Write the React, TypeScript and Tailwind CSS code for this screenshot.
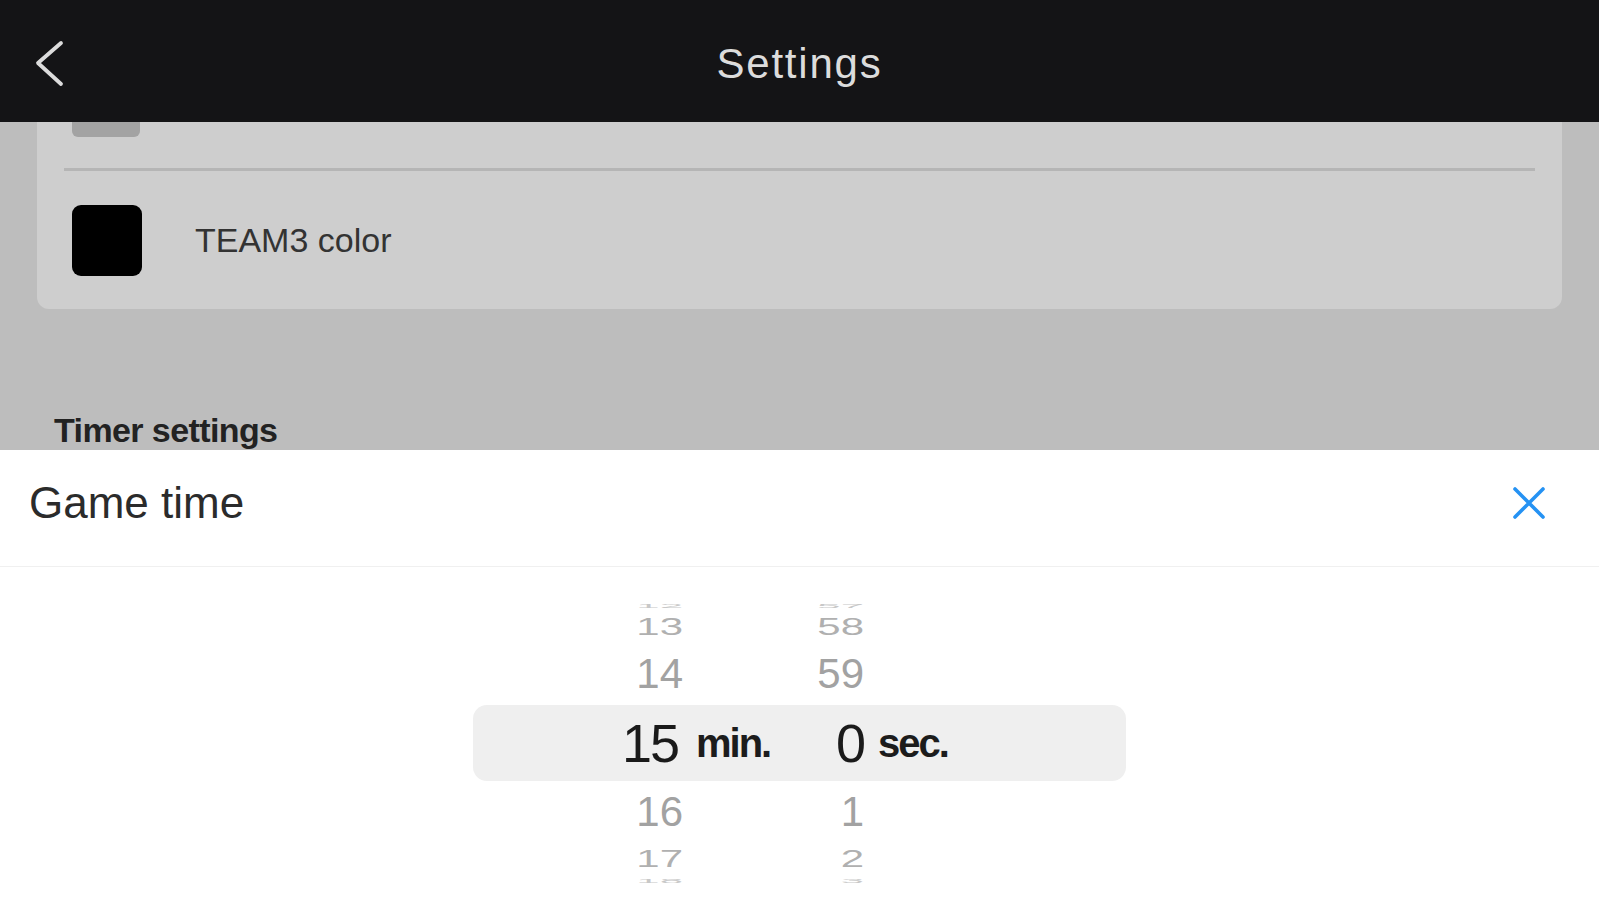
import React from "react";

const FONT = { fontFamily: '"Liberation Sans", Arial, sans-serif' };

type RowProps = {
  min: string;
  sec: string;
  h: string;
  textCls: string;
  selected?: boolean;
};

function PickerRow({ min, sec, h, textCls, selected }: RowProps) {
  return (
    <div className={`flex items-center ${h} w-[653px] ${selected ? "bg-[#efefef] rounded-[14px]" : ""}`}>
      <div className={`w-[210px] text-right leading-none ${selected ? "pr-[5px]" : ""} ${textCls}`}>{min}</div>
      <div className="w-[100px] pl-[13px] leading-none">
        {selected ? <span className="text-[40px] font-bold tracking-[-2px] text-[#1c1c1c]">min.</span> : null}
      </div>
      <div className={`w-[81px] text-right leading-none ${textCls}`}>{sec}</div>
      <div className="w-[262px] pl-[14px] leading-none">
        {selected ? <span className="text-[40px] font-bold tracking-[-2px] text-[#1c1c1c]">sec.</span> : null}
      </div>
    </div>
  );
}

export default function App() {
  return (
    <div className="w-[1599px] h-[900px] overflow-hidden flex flex-col bg-white" style={FONT}>
      {/* Top bar */}
      <div className="h-[122px] shrink-0 bg-[#141416] flex items-center relative">
        <div className="absolute left-[30px] top-[38px]">
          <svg width="40" height="50" viewBox="0 0 40 50" fill="none">
            <path d="M31 5 L8 25 L31 46" stroke="#dcdcdc" strokeWidth="3.8" strokeLinecap="round" strokeLinejoin="round" />
          </svg>
        </div>
        <div className="flex-1 text-center pt-[4px] text-[42px] tracking-[1.8px] text-[#dcdcdc]">Settings</div>
      </div>

      {/* Dimmed page */}
      <div className="h-[328px] shrink-0 bg-[#bdbdbd] overflow-hidden">
        <div className="mx-[37px] bg-[#cecece] rounded-b-[12px] flex flex-col">
          <div className="flex items-start h-[46px] px-[35px]">
            <div className="w-[68px] h-[15px] bg-[#a3a3a3] rounded-b-[6px]" />
          </div>
          <div className="mx-[27px] h-[3px] bg-[#b5b5b5]" />
          <div className="h-[138px] flex items-center px-[35px]">
            <div className="w-[70px] h-[71px] bg-black rounded-[9px]" />
            <div className="ml-[53px] text-[34px] text-[#333]">TEAM3 color</div>
          </div>
        </div>
        <div className="pl-[54px] pt-[104px] text-[34px] font-bold tracking-[-0.6px] text-[#222] leading-none">
          Timer settings
        </div>
      </div>

      {/* Bottom sheet */}
      <div className="flex-1 bg-white flex flex-col">
        <div className="h-[117px] shrink-0 flex items-center justify-between pl-[29px] pr-[53px] pb-[10px] border-b border-[#f0f0f0]">
          <div className="text-[44px] text-[#2b2b2b]">Game time</div>
          <svg width="34" height="34" viewBox="0 0 34 34" fill="none">
            <path d="M3 3 L31 31 M31 3 L3 31" stroke="#2592f3" strokeWidth="3.6" strokeLinecap="round" />
          </svg>
        </div>
        <div className="flex flex-col items-center pt-[33px]">
          <PickerRow min="12" sec="57" h="h-[11px]" textCls="text-[42px] text-[#c8c8c8] scale-y-[0.12]" />
          <PickerRow min="13" sec="58" h="h-[32px]" textCls="text-[42px] text-[#b0b0b0] scale-y-[0.58]" />
          <PickerRow min="14" sec="59" h="h-[62px]" textCls="text-[42px] text-[#a2a2a2]" />
          <PickerRow min="15" sec="0" h="h-[76px]" textCls="text-[54px] tracking-[-2px] text-[#1a1a1a]" selected />
          <PickerRow min="16" sec="1" h="h-[62px]" textCls="text-[42px] text-[#a2a2a2]" />
          <PickerRow min="17" sec="2" h="h-[32px]" textCls="text-[42px] text-[#b0b0b0] scale-y-[0.58]" />
          <PickerRow min="18" sec="3" h="h-[11px]" textCls="text-[42px] text-[#c8c8c8] scale-y-[0.12]" />
        </div>
      </div>
    </div>
  );
}
